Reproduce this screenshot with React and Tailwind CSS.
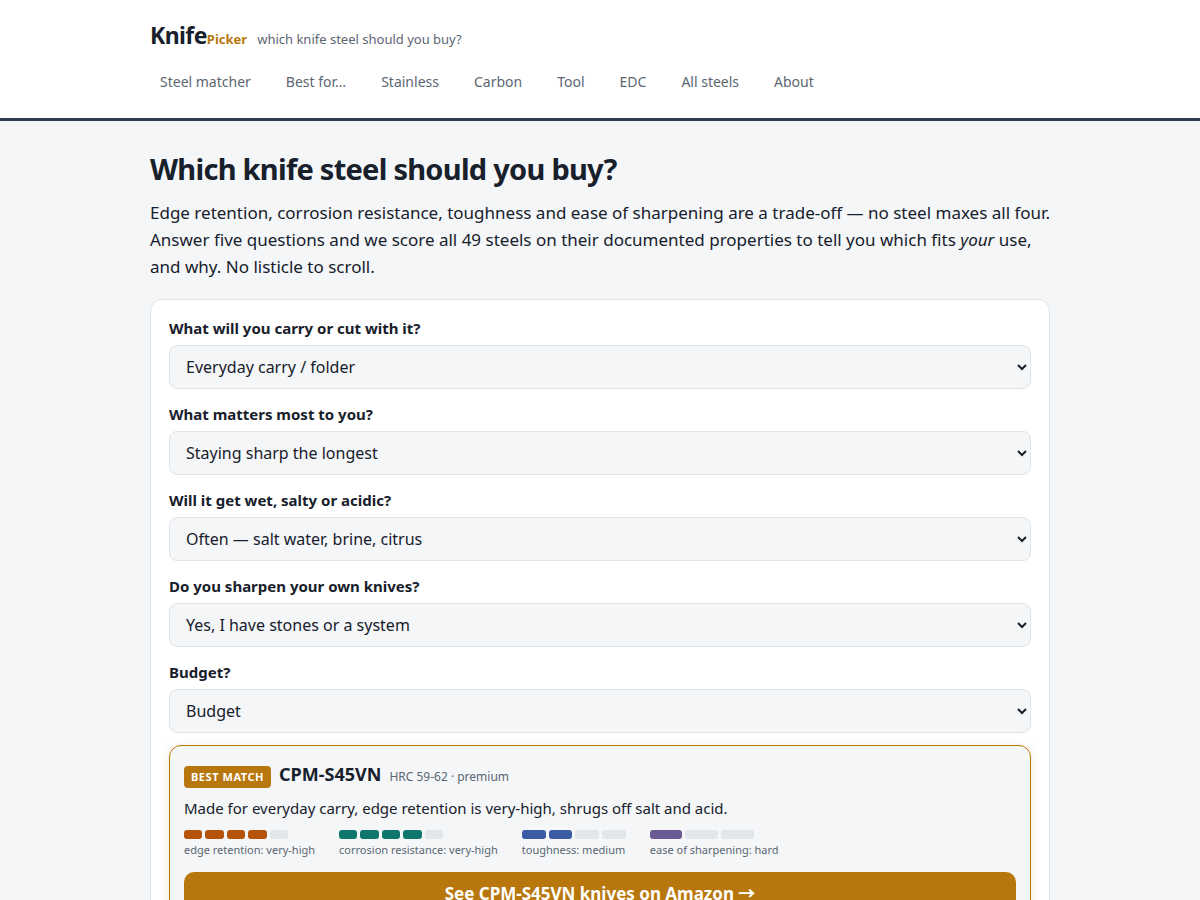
const navItems = ["Steel matcher", "Best for…", "Stainless", "Carbon", "Tool", "EDC", "All steels", "About"];

const questions = [
  { id: "use", label: "What will you carry or cut with it?", options: ["Everyday carry / folder", "Kitchen knife", "Outdoor / fixed blade"] },
  { id: "priority", label: "What matters most to you?", options: ["Staying sharp the longest", "Toughness", "Easy sharpening"] },
  { id: "wet", label: "Will it get wet, salty or acidic?", options: ["Often — salt water, brine, citrus", "Sometimes", "Rarely"] },
  { id: "sharpen", label: "Do you sharpen your own knives?", options: ["Yes, I have stones or a system", "No"] },
  { id: "budget", label: "Budget?", options: ["Budget", "Mid-range", "Premium"] },
];

const ratings = [
  { label: "edge retention: very-high", filled: 4, total: 5, color: "bg-[#b45309]" },
  { label: "corrosion resistance: very-high", filled: 4, total: 5, color: "bg-[#0f766e]" },
  { label: "toughness: medium", filled: 2, total: 4, color: "bg-[#3b5ba5]" },
  { label: "ease of sharpening: hard", filled: 1, total: 3, color: "bg-[#6b5b95]" },
];

function Rating({ label, filled, total, color }) {
  return (
    <div>
      <div className="flex h-[9px] w-[104px] gap-[3px]" aria-hidden="true">
        {Array.from({ length: total }, (_, i) => (
          <span key={i} className={`flex-1 rounded-[3px] ${i < filled ? color : "bg-[#e2e6ea]"}`} />
        ))}
      </div>
      <div className="mt-0.5 text-[11px] leading-[18px] text-[#5b6672]">{label}</div>
    </div>
  );
}

export default function App() {
  return (
    <div className="min-h-screen bg-[#f4f6f8] font-['Noto_Sans','Noto_Sans_CJK_JP',sans-serif] text-[#17202b]">
      <header className="border-b-3 border-[#2f3e4e] bg-white">
        <div className="mx-auto max-w-[936px] px-[18px] pt-[18px] pb-4">
          <div className="flex flex-wrap items-baseline gap-x-[10px]">
            <a href="#home" className="text-[23px] leading-[34px] font-bold tracking-tight">
              Knife<span className="text-[13px] tracking-normal text-[#b8770d]">Picker</span>
            </a>
            <span className="text-[13px] leading-5 text-[#5b6672]">which knife steel should you buy?</span>
          </div>
          <nav className="mt-[6px] flex flex-wrap gap-x-[15px]">
            {navItems.map((item) => (
              <a key={item} href="#nav" className="p-[10px] text-[14px] leading-5 text-[#5b6672]">
                {item}
              </a>
            ))}
          </nav>
        </div>
      </header>

      <main className="mx-auto max-w-[936px] px-[18px] pt-7 pb-12">
        <h1 className="text-[29px] leading-10 font-bold tracking-tight">Which knife steel should you buy?</h1>
        <p className="mt-[10px] text-[17px] leading-[27px]">
          Edge retention, corrosion resistance, toughness and ease of sharpening are a trade-off — no steel maxes all
          four. Answer five questions and we score all 49 steels on their documented properties to tell you which fits{" "}
          <em>your</em> use, and why. No listicle to scroll.
        </p>

        <section className="mt-[19px] rounded-xl border border-[#dfe4e8] bg-white px-[18px] py-[15px]">
          <form>
            {questions.map((q) => (
              <div key={q.id} className="mb-3">
                <label htmlFor={q.id} className="block pb-1 text-[15px] leading-[26px] font-bold">
                  {q.label}
                </label>
                <select
                  id={q.id}
                  className="block h-11 w-full rounded-lg border border-[#dfe4e8] bg-[#f4f6f8] px-3 text-[16px] text-[#17202b]"
                >
                  {q.options.map((o) => (
                    <option key={o}>{o}</option>
                  ))}
                </select>
              </div>
            ))}
          </form>

          <article className="rounded-xl border border-[#b8770d] bg-[#f4f6f8] p-[14px] shadow-[0_2px_10px_rgba(184,119,13,0.18)]">
            <div className="flex flex-wrap items-baseline gap-x-2">
              <span className="rounded-[4px] bg-[#b8770d] px-[7px] text-[11px] leading-[22px] font-bold tracking-wider text-white">
                BEST MATCH
              </span>
              <h2 className="text-[18px] leading-7 font-bold">CPM-S45VN</h2>
              <span className="text-[12px] text-[#5b6672]">HRC 59-62 · premium</span>
            </div>
            <p className="mt-2 text-[15px] leading-6">
              Made for everyday carry, edge retention is very-high, shrugs off salt and acid.
            </p>
            <div className="mt-[10px] flex flex-wrap gap-x-6 gap-y-2">
              {ratings.map((r) => (
                <Rating key={r.label} {...r} />
              ))}
            </div>
            <a
              href="#amazon"
              className="mt-[13px] block rounded-[10px] bg-[#b8770d] px-4 py-2 text-center text-[17px] leading-[27px] font-bold text-white"
            >
              See CPM-S45VN knives on Amazon →
            </a>
          </article>
        </section>
      </main>
    </div>
  );
}
